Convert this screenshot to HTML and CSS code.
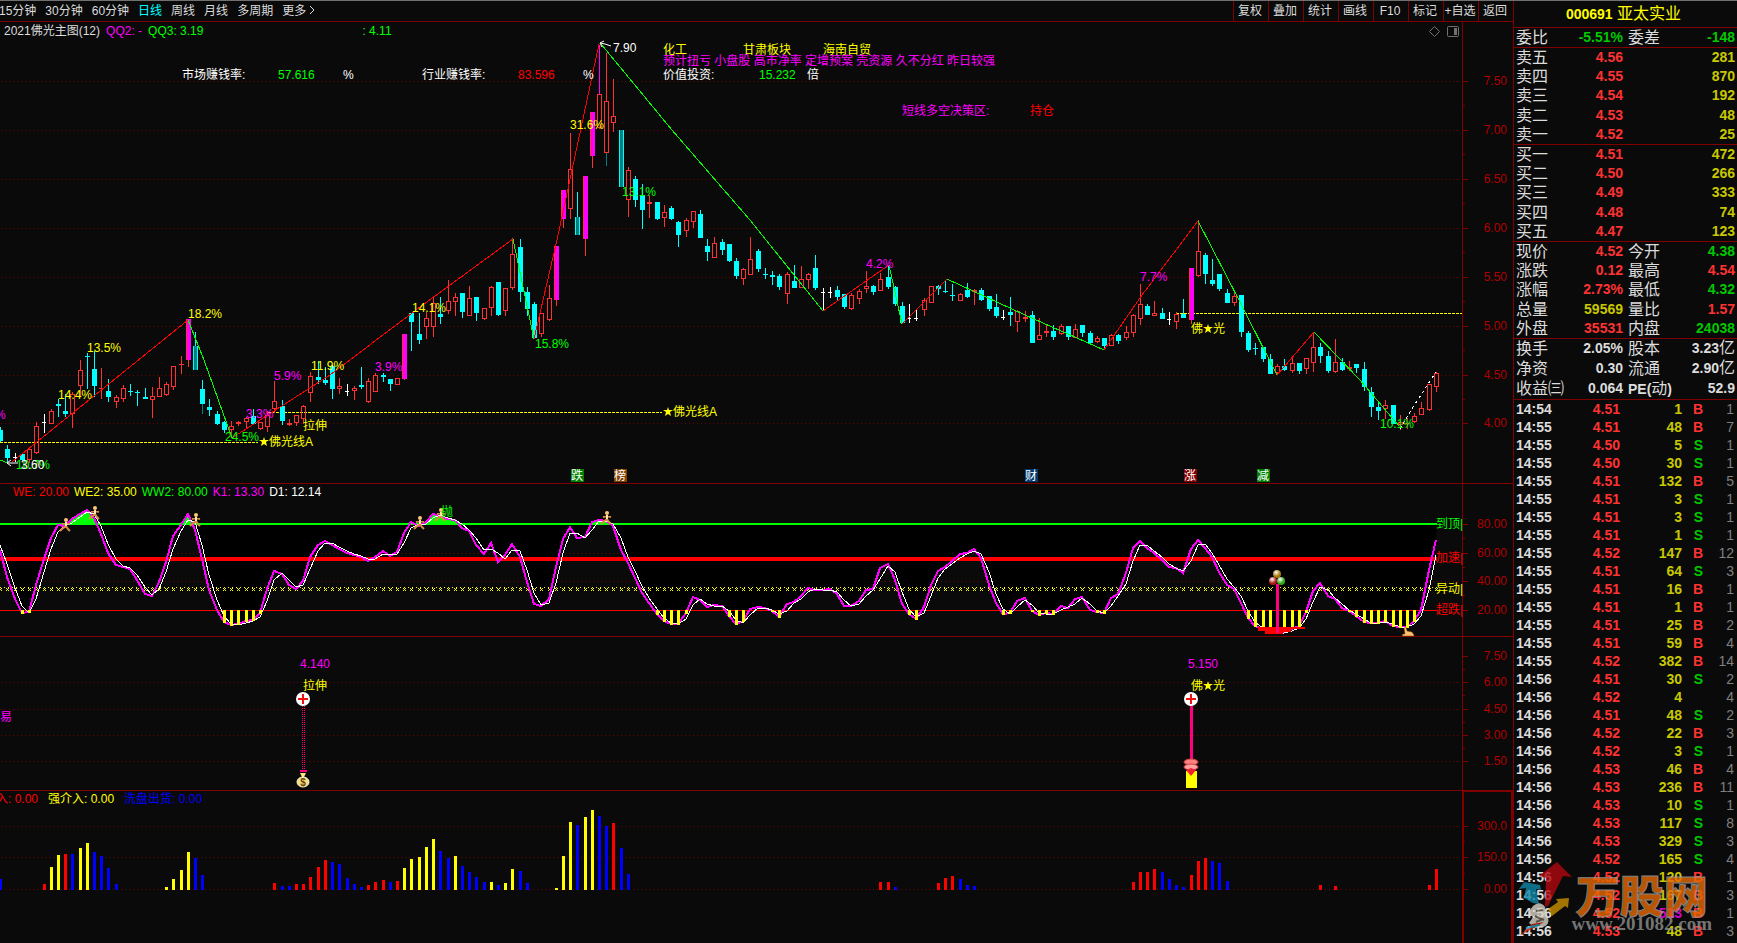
FILE: index.html
```html
<!DOCTYPE html>
<html lang="zh-CN">
<head>
    <meta charset="UTF-8">
    <meta name="viewport" content="width=device-width, initial-scale=1.0">
    <title>000691 亚太实业</title>
    <link rel="stylesheet" href="styles.css">
</head>
<body>
<div class="app">

    <main class="charts">
        <div class="toolbar">
            <nav class="periods">
                <a href="#">15分钟</a>
                <a href="#">30分钟</a>
                <a href="#">60分钟</a>
                <a href="#" class="active">日线</a>
                <a href="#">周线</a>
                <a href="#">月线</a>
                <a href="#">多周期</a>
                <a href="#">更多<svg width="6" height="10" viewBox="0 0 6 10"><path d="M1 1l4 4-4 4" fill="none" stroke="#dcdcdc"/></svg></a>
            </nav>
            <div class="tools">
                <button type="button">复权</button>
                <button type="button">叠加</button>
                <button type="button">统计</button>
                <button type="button">画线</button>
                <button type="button">F10</button>
                <button type="button">标记</button>
                <button type="button">+自选</button>
                <button type="button">返回</button>
            </div>
        </div>

        <!-- main price chart -->
        <section class="pane">
            <div class="legend legend-main">
                <span>2021佛光主图(12)</span>
                <span class="magenta">QQ2: -</span>
                <span class="lime">QQ3: 3.19</span>
                <span class="lime last">: 4.11</span>
            </div>
            <svg viewBox="0 22 1513 462">
                <g id="kline"></g>
                <g class="white">
                    <text x="182" y="79">市场赚钱率:</text>
                    <text x="343" y="79">%</text>
                    <text x="422" y="79">行业赚钱率:</text>
                    <text x="583" y="79">%</text>
                    <text x="663" y="79">价值投资:</text>
                    <text x="807" y="79">倍</text>
                    <text x="613" y="52">7.90</text>
                    <path class="stroke" d="M600 43l5 1 6 2M600 43l4-2M600 43l2 4"/>
                </g>
                <g class="lime">
                    <text x="278" y="79">57.616</text>
                    <text x="759" y="79">15.232</text>
                    <text x="225" y="441">24.5%</text>
                    <text x="535" y="348">15.8%</text>
                    <text x="622" y="196">13.1%</text>
                    <text x="1380" y="428">10.1%</text>
                    <text x="16" y="469">10.7%</text>
                </g>
                <g class="red">
                    <text x="518" y="79">83.596</text>
                    <text x="1030" y="115">持仓</text>
                </g>
                <g class="yellow">
                    <text x="663" y="54">化工</text>
                    <text x="743" y="54">甘肃板块</text>
                    <text x="823" y="54">海南自贸</text>
                    <text x="58" y="399">14.4%</text>
                    <text x="87" y="352">13.5%</text>
                    <text x="188" y="318">18.2%</text>
                    <text x="311" y="370">11.9%</text>
                    <text x="412" y="312">14.1%</text>
                    <text x="570" y="129">31.6%</text>
                    <text x="303" y="430">拉伸</text>
                    <text x="269" y="446">佛光线A</text>
                    <text x="673" y="416">佛光线A</text>
                    <text x="1191" y="333">佛</text>
                    <text x="1213" y="333">光</text>
                    <use href="#star" x="264" y="442"/>
                    <use href="#star" x="668" y="412"/>
                    <use href="#star" x="1208" y="329"/>
                </g>
                <g class="magenta">
                    <text x="663" y="65">预计扭亏 小盘股 高市净率 定增预案 壳资源 久不分红 昨日较强</text>
                    <text x="902" y="115">短线多空决策区:</text>
                    <text x="-5" y="419">%</text>
                    <text x="246" y="418">3.3%</text>
                    <text x="274" y="380">5.9%</text>
                    <text x="375" y="371">3.9%</text>
                    <text x="866" y="268">4.2%</text>
                    <text x="1140" y="281">7.7%</text>
                </g>
                <g class="white">
                    <text x="21" y="469">3.60</text>
                    <path class="stroke" d="M7 463h11M7 463l4-3M7 463l4 3"/>
                </g>
                <g id="badges"></g>
                <g class="pane-icons">
                    <path d="M1434.5 26.500l5 5-5 5-5-5z"/>
                    <rect x="1447.500" y="26.500" width="11" height="10" rx="1"/>
                    <rect class="fill" x="1454" y="28" width="3" height="7"/>
                </g>
                <defs>
                    <path id="star" d="M0-5l1 3h4l-3 2 1 4-3-2-3 2 1-4-3-2h4z"/>
                </defs>
            </svg>
        </section>

        <!-- KD style oscillator -->
        <section class="pane">
            <div class="legend legend-osc">
                <span class="red">WE: 20.00</span>
                <span class="yellow">WE2: 35.00</span>
                <span class="lime">WW2: 80.00</span>
                <span class="magenta">K1: 13.30</span>
                <span class="white">D1: 12.14</span>
            </div>
            <svg viewBox="0 484 1513 153">
                <defs>
                    <g id="runner">
                        <circle cx="1" cy="-6" r="2" fill="#ffc878"/>
                        <path d="M1-4v4l-4 3-2 2M1 0l2 3 2 2M-3-2l4-1 4 1" fill="none" stroke="#d88c3c" stroke-width="2"/>
                        <path d="M1-4v4" stroke="#ffe6b4" stroke-width="2"/>
                    </g>
                    <radialGradient id="gold" cx=".4" cy=".3"><stop offset="0" stop-color="#fff"/><stop offset="1" stop-color="#a87808"/></radialGradient>
                    <radialGradient id="ruby" cx=".4" cy=".3"><stop offset="0" stop-color="#fff"/><stop offset="1" stop-color="#b01818"/></radialGradient>
                    <radialGradient id="jade" cx=".4" cy=".3"><stop offset="0" stop-color="#fff"/><stop offset="1" stop-color="#30a818"/></radialGradient>
                </defs>
                <g id="osc"></g>
                <use href="#runner" x="65" y="526"/>
                <use href="#runner" x="94" y="514"/>
                <use href="#runner" x="195" y="521"/>
                <use href="#runner" x="419" y="524"/>
                <use href="#runner" x="440" y="516"/>
                <use href="#runner" x="606" y="519"/>
                <rect x="1276" y="584" width="3" height="49" fill="#ff0080"/>
                <circle cx="1277" cy="574" r="4" fill="url(#gold)"/>
                <circle cx="1273" cy="581" r="4" fill="url(#ruby)"/>
                <circle cx="1281" cy="581" r="4" fill="url(#jade)"/>
                <path d="M1404 628l2-1 1 4 5 1 2 3v1h-12l1-2h2z" fill="#ffc070" stroke="#804000" stroke-width=".5"/>
                <text class="lime" x="441" y="516">抛</text>
                <text class="lime" x="1436" y="528">到顶|</text>
                <text class="red" x="1436" y="562">加速|</text>
                <text class="yellow" x="1436" y="593">异动|</text>
                <text class="red" x="1436" y="614">超跌|</text>
            </svg>
        </section>

        <!-- signal pane -->
        <section class="pane">
            <svg viewBox="0 637 1513 154">
                <g id="signal"></g>
                <text class="magenta" x="0" y="721">易</text>
                <text class="magenta" x="300" y="668">4.140</text>
                <text class="yellow" x="303" y="690">拉伸</text>
                <path d="M302.500 706v64M304.500 706v64" stroke="#ff0080" stroke-dasharray="1 1"/>
                <rect x="300" y="770" width="7" height="2" fill="#ff0080"/>
                <circle cx="303" cy="699" r="7" fill="#fff"/>
                <path d="M298 699h10M303 694v10" stroke="#f01010" stroke-width="2"/>
                <path d="M300 773h6l-2 4h-2z" fill="#ffe878"/>
                <ellipse cx="303" cy="782" rx="6" ry="5" fill="#f4e080" stroke="#fff8c8"/>
                <text class="dollar" x="303" y="786">$</text>

                <text class="magenta" x="1188" y="668">5.150</text>
                <text class="yellow" x="1191" y="690">佛</text>
                <text class="yellow" x="1213" y="690">光</text>
                <use class="yellow" href="#star" x="1208" y="686"/>
                <rect x="1190" y="706" width="3" height="54" fill="#ff0080"/>
                <circle cx="1191" cy="699" r="7" fill="#fff"/>
                <path d="M1186 699h10M1191 694v10" stroke="#f01010" stroke-width="2"/>
                <rect x="1186" y="771" width="11" height="17" fill="#ff0"/>
                <ellipse cx="1191" cy="762" rx="7" ry="3" fill="#ff8080" stroke="#d04040"/>
                <ellipse cx="1191" cy="767" rx="7" ry="3" fill="#ffa0a0" stroke="#d04040"/>
                <path d="M1186 770l5-2 5 2-5 6z" fill="#f02030"/>
            </svg>
        </section>

        <!-- capital flow pane -->
        <section class="pane">
            <div class="legend legend-flow">
                <span class="red">入: 0.00</span>
                <span class="yellow">强介入: 0.00</span>
                <span class="blue">洗盘出货: 0.00</span>
            </div>
            <svg viewBox="0 791 1513 152">
                <g id="flow"></g>
            </svg>
        </section>
    </main>

    <aside class="quote">
        <h1><b>000691</b> 亚太实业</h1>

        <table class="book">
            <tbody>
                <tr><th>委比</th><td class="dn">-5.51%</td><th>委差</th><td class="dn">-148</td></tr>
            </tbody>
        </table>
        <table class="book pad">
            <tbody>
                <tr><th>卖五</th><td class="up">4.56</td><th></th><td class="vol">281</td></tr>
                <tr><th>卖四</th><td class="up">4.55</td><th></th><td class="vol">870</td></tr>
                <tr><th>卖三</th><td class="up">4.54</td><th></th><td class="vol">192</td></tr>
                <tr><th>卖二</th><td class="up">4.53</td><th></th><td class="vol">48</td></tr>
                <tr><th>卖一</th><td class="up">4.52</td><th></th><td class="vol">25</td></tr>
            </tbody>
        </table>
        <table class="book pad">
            <tbody>
                <tr><th>买一</th><td class="up">4.51</td><th></th><td class="vol">472</td></tr>
                <tr><th>买二</th><td class="up">4.50</td><th></th><td class="vol">266</td></tr>
                <tr><th>买三</th><td class="up">4.49</td><th></th><td class="vol">333</td></tr>
                <tr><th>买四</th><td class="up">4.48</td><th></th><td class="vol">74</td></tr>
                <tr><th>买五</th><td class="up">4.47</td><th></th><td class="vol">123</td></tr>
            </tbody>
        </table>
        <table class="book pad">
            <tbody>
                <tr><th>现价</th><td class="up">4.52</td><th>今开</th><td class="dn">4.38</td></tr>
                <tr><th>涨跌</th><td class="up">0.12</td><th>最高</th><td class="up">4.54</td></tr>
                <tr><th>涨幅</th><td class="up">2.73%</td><th>最低</th><td class="dn">4.32</td></tr>
                <tr><th>总量</th><td class="vol">59569</td><th>量比</th><td class="up">1.57</td></tr>
                <tr><th>外盘</th><td class="up">35531</td><th>内盘</th><td class="dn">24038</td></tr>
            </tbody>
        </table>
        <table class="book stats">
            <tbody>
                <tr><th>换手</th><td>2.05%</td><th>股本</th><td>3.23<i>亿</i></td></tr>
                <tr><th>净资</th><td>0.30</td><th>流通</th><td>2.90<i>亿</i></td></tr>
                <tr><th>收益㈢</th><td>0.064</td><th><b>PE(</b>动<b>)</b></th><td>52.9</td></tr>
            </tbody>
        </table>

        <table class="ticks">
            <tbody id="ticks"></tbody>
        </table>

        <div class="watermark">
            <svg class="mark" width="54" height="74" viewBox="0 0 54 74">
                <path d="M27 45l1-29-7-2L39 0l15 15-9-1-15 30z" fill="#b00810"/>
                <path d="M6 20l16 3 1 5-5-1 3 15-6-1-9-5 2-10-7 1z" fill="#1088a8"/>
                <path d="M30 47l10-7-2-3 13-1-1 10-3-2-13 10z" fill="#c89000"/>
                <path d="M15 44q7-6 12 1l3 10q2 8-5 10l-8 1-6-5 4-6-5-4z" fill="#d8d4c8"/>
                <path d="M18 49l7-1M17 54l9 4M18 60l7-3" stroke="#706858" stroke-width="2"/>
                <path d="M2 73l12-11 12-2-12 7z" fill="#d02010"/>
                <path d="M8 66l14-3" stroke="#20a0c0" stroke-width="2"/>
            </svg>
            <div class="brand">
                <strong>万股网</strong>
                <span>www.201082.com</span>
            </div>
        </div>
    </aside>

</div>
<script src="script.js"></script>
</body>
</html>
```
FILE: styles.css
```css
body {
    margin: 0;
    background-color: #0a0a0a;
    color: #dcdcdc;
    font-family: "Liberation Sans", "Noto Sans CJK SC", sans-serif;
    font-size: 12px;
}

.app {
    display: flex;
    border-top: 1px solid #707070;
    overflow: hidden;
}

.charts {
    flex: 1;
    min-width: 0;
}

/* toolbar */
.toolbar {
    display: flex;
    justify-content: space-between;
    height: 20px;
    border-bottom: 1px solid #800000;
}

.periods {
    display: flex;
    gap: 9px;
    margin-left: -1px;
    line-height: 20px;
    white-space: nowrap;
}

.periods a {
    color: #dcdcdc;
    text-decoration: none;
}

.periods a.active {
    color: #00ffff;
}

.periods svg {
    margin-left: 3px;
}

.tools {
    display: flex;
}

.tools button {
    width: 35px;
    padding: 0 2px 0 0;
    border: 0;
    border-left: 1px solid #800000;
    background: none;
    color: #dcdcdc;
    font: inherit;
    line-height: 20px;
    white-space: nowrap;
    cursor: pointer;
}

/* chart panes */
.pane {
    position: relative;
}

.pane > svg {
    display: block;
    width: 100%;
    height: auto;
}

.legend {
    position: absolute;
    top: 0;
    left: 4px;
    display: flex;
    gap: 6px;
    line-height: 16px;
    white-space: nowrap;
}

.legend-main {
    top: 1px;
}

.legend-main .last {
    margin-left: 153px;
}

.legend-osc {
    left: 13px;
    gap: 5px;
}

.legend-flow {
    left: -4px;
    gap: 10px;
}

.white { color: #fff; fill: #fff; }
.lime { color: #00ff00; fill: #00ff00; }
.red { color: #ff0000; fill: #ff0000; }
.yellow { color: #ffff00; fill: #ffff00; }
.magenta { color: #ff00ff; fill: #ff00ff; }
.blue { color: #0000ff; fill: #0000ff; }

.stroke {
    fill: none;
    stroke: #fff;
}

.crisp {
    shape-rendering: crispEdges;
}

.grid {
    stroke: #6e0000;
    stroke-dasharray: 1 3;
}

.frame {
    fill: none;
    stroke: #800000;
}

.axis {
    fill: #b00000;
    text-anchor: end;
}

.pane-icons {
    fill: none;
    stroke: #707070;
}

.pane-icons .fill {
    fill: #707070;
    stroke: none;
}

.badge {
    fill: #fff;
}

.dollar {
    fill: #704010;
    font-size: 10px;
    font-weight: bold;
    text-anchor: middle;
}

/* quote panel */
.quote {
    position: relative;
    width: 223px;
    border-left: 1px solid #800000;
}

.quote h1 {
    margin: 0;
    padding-right: 4px;
    height: 26px;
    border-bottom: 1px solid #800000;
    color: #ffff00;
    font-size: 16px;
    font-weight: normal;
    line-height: 26px;
    text-align: center;
}

.quote h1 b {
    font-size: 14px;
}

.quote table {
    width: 100%;
    border-collapse: collapse;
    table-layout: fixed;
}

.quote td,
.quote th {
    padding: 0;
    font-weight: bold;
    font-size: 14px;
    text-align: right;
    white-space: nowrap;
}

.book {
    height: 20px;
    border-bottom: 1px solid #800000;
}

.book.pad {
    height: 97px;
}

.book.stats {
    height: 61px;
}

.book td,
.book th {
    height: 19px;
    line-height: 19px;
}

.book th {
    width: 48px;
    padding-left: 2px;
    font-size: 16px;
    font-weight: normal;
    text-align: left;
}

.book td:nth-child(2) {
    width: 59px;
}

.book td:nth-child(2) + th {
    padding-left: 5px;
}

.book td:last-child {
    padding-right: 2px;
}

.book th b {
    font-size: 14px;
}

.book i {
    font-size: 16px;
    font-style: normal;
    font-weight: normal;
    line-height: 16px;
}

.quote .up { color: #ff3232; }
.quote .dn { color: #00c800; }
.quote .vol { color: #c8c800; }
.quote .big { color: #d000d0; }

.ticks td {
    height: 18px;
    line-height: 18px;
}

.quote .ticks td:first-child {
    width: 68px;
    padding-left: 2px;
    text-align: left;
}

.ticks td:nth-child(2) { width: 36px; }
.ticks td:nth-child(3) { width: 62px; }
.ticks td:nth-child(4) { width: 21px; }

.quote .ticks td:last-child {
    padding-right: 3px;
    color: #808080;
    font-weight: normal;
}

.watermark {
    position: absolute;
    right: 25px;
    bottom: 7px;
    display: flex;
    align-items: flex-end;
    opacity: 0.8;
}

.brand {
    display: flex;
    flex-direction: column;
    align-items: center;
    padding-bottom: 4px;
}

.brand strong {
    color: #e86800;
    font-family: "Noto Sans CJK SC", sans-serif;
    font-size: 44px;
    font-weight: 900;
    line-height: 44px;
    -webkit-text-stroke: 1px #a0a0a0;
}

.brand span {
    color: #909090;
    font-family: "Liberation Serif", serif;
    font-size: 19px;
    font-weight: bold;
    line-height: 16px;
}
```
FILE: script.js
```js
var AXIS_X = 1462;
var STEP = 7.214;

// pixel column of the n-th trading day
function dayX(i) {
    return Math.floor(7.95 + STEP * i);
}

function rect(x, y, w, h, fill) {
    return '<rect x="' + x + '" y="' + y + '" width="' + w + '" height="' + h + '" fill="' + fill + '"/>';
}

function line(points, color, width, extra) {
    return '<polyline points="' + points + '" fill="none" stroke="' + color + '" stroke-width="' + (width || 1) + '" ' + (extra || '') + '/>';
}

// grid lines, axis ticks, axis labels and bottom border of a pane
function frame(top, bottom, marks, border) {
    var s = '';
    marks.forEach(function (m, n) {
        var y = m[0] + 0.5;
        if (!m[2]) {
            s += '<line class="grid" x1="1" x2="1460" y1="' + y + '" y2="' + y + '"/>';
        }
        s += '<path class="frame" d="M' + AXIS_X + ' ' + y + 'h6"/>';
        if (n < marks.length - 1) {
            var mid = Math.floor((m[0] + marks[n + 1][0]) / 2) + 0.5;
            s += '<path class="frame" d="M' + AXIS_X + ' ' + mid + 'h3"/>';
        }
    });
    s += '<path class="frame" d="M' + (AXIS_X + 0.5) + ' ' + top + 'V' + bottom + '"/>';
    if (border) {
        s += '<path class="frame" d="M0 ' + (bottom - 0.5) + 'H1513"/>';
    }
    s = '<g class="crisp">' + s + '</g>';
    marks.forEach(function (m) {
        s += '<text class="axis" x="1507" y="' + (m[0] + 4) + '">' + m[1] + '</text>';
    });
    return s;
}

// type high top bottom low, first entry is day -1
// r hollow red, c cyan, w doji, m limit-up, t limit-down
var candles = ('c 427 430 441 442,c 445 449 458 462,w 453 457 457 462,c 453 454 460 461,r 449 449 460 463,' +
    'r 422 426 453 454,w 414 422 422 433,r 409 411 424 424,c 399 404 406 417,c 394 411 414 417,r 392 394 414 428,' +
    'r 360 370 386 396,c 353 356 357 389,c 351 369 386 397,r 368 388 389 399,c 379 391 397 402,r 395 397 402 408,' +
    'r 385 388 399 402,c 384 391 392 396,c 390 392 393 406,c 388 397 399 399,r 387 396 400 418,r 377 388 397 397,' +
    'r 382 384 395 396,r 366 366 387 390,r 356 364 365 374,m 319 319 360 367,t 332 346 370 370,c 380 389 404 414,' +
    'c 399 407 410 416,c 411 414 424 425,c 421 422 430 433,r 421 426 430 437,r 421 422 424 426,r 417 418 422 428,' +
    'c 409 416 424 424,r 422 422 429 430,r 411 415 427 432,r 381 401 409 413,c 400 406 421 425,r 419 423 425 426,' +
    'r 415 415 423 426,r 405 406 419 424,r 372 376 393 402,c 361 377 380 384,c 367 380 383 385,c 365 366 389 399,' +
    'r 378 386 389 394,w 384 391 391 396,r 386 388 391 400,c 367 385 387 389,r 378 381 402 403,r 373 375 392 392,' +
    'c 373 375 377 382,c 379 379 384 391,r 378 378 385 385,m 334 334 379 380,c 313 313 322 351,c 313 334 340 344,' +
    'r 312 318 327 339,r 298 303 327 337,c 297 314 317 324,r 280 301 311 314,r 293 297 302 316,c 293 293 312 318,' +
    'r 286 298 316 316,c 297 297 313 321,r 308 308 319 320,r 286 287 308 316,c 282 282 315 316,r 288 288 311 316,' +
    'r 238 254 288 290,c 239 247 292 302,c 287 292 309 316,c 302 304 338 338,r 313 313 334 337,r 285 298 320 321,' +
    'm 246 246 300 306,m 190 190 219 228,r 133 169 209 219,t 192 217 235 235,m 176 176 239 256,m 112 112 156 168,' +
    'r 94 94 128 129,r 53 101 153 153,r 79 116 123 132,t 130 130 187 187,r 167 170 200 217,c 176 179 200 207,' +
    'c 184 195 210 229,r 195 202 204 218,c 202 202 219 220,r 205 212 218 227,c 206 208 219 220,c 221 222 235 247,' +
    'r 218 220 231 237,r 211 211 222 228,c 210 214 238 238,c 239 246 252 261,r 237 243 258 258,c 239 242 250 255,' +
    'c 244 244 261 262,c 258 261 276 279,r 268 269 279 285,r 237 259 275 275,c 249 251 269 272,c 268 274 275 279,' +
    'c 271 275 277 285,c 274 276 287 290,r 272 274 294 304,c 265 281 288 288,r 266 279 288 288,r 273 274 280 289,' +
    'c 255 268 288 290,w 288 292 292 311,w 287 292 292 298,c 286 290 297 301,c 294 294 307 309,r 293 295 309 310,' +
    'r 289 291 299 304,r 271 286 289 293,c 285 286 292 295,r 273 279 291 291,c 265 277 287 289,c 286 287 304 306,' +
    'c 302 306 323 324,w 304 318 318 323,w 310 318 318 321,r 298 300 310 316,r 286 286 303 303,c 285 286 289 295,' +
    'c 280 291 292 293,c 284 295 296 301,r 293 294 301 301,c 283 290 297 298,r 289 290 292 305,c 288 290 300 301,' +
    'c 296 296 309 311,c 294 307 316 318,w 310 317 317 320,c 297 312 315 326,r 310 311 322 332,r 311 317 319 322,' +
    'c 311 315 343 343,r 318 335 340 340,r 324 331 333 337,c 325 331 337 340,r 324 326 334 335,c 326 326 337 340,' +
    'r 324 329 338 338,c 325 325 333 337,c 331 333 343 344,r 336 338 342 343,c 338 338 346 350,r 334 335 346 346,' +
    'c 334 335 341 344,r 326 332 338 340,r 314 315 333 337,r 284 304 319 325,c 304 306 315 315,r 301 313 316 316,' +
    'c 308 313 319 319,w 312 319 319 325,r 312 314 322 329,c 299 314 318 318,m 268 268 320 324,r 220 251 276 277,' +
    'c 253 255 274 284,c 259 280 284 286,c 274 274 289 291,c 289 293 303 303,r 290 296 303 306,c 295 295 332 337,' +
    'c 331 333 350 352,c 343 348 349 355,c 347 347 359 362,c 354 359 374 374,r 364 366 373 375,c 359 366 370 371,' +
    'r 358 363 371 373,c 363 363 371 374,r 358 358 369 374,r 332 347 363 372,c 343 347 356 363,c 351 356 371 373,' +
    'r 339 362 372 373,c 358 362 370 371,r 361 367 369 371,c 364 364 368 373,c 362 369 387 391,c 387 392 407 417,' +
    'c 402 407 411 420,r 400 405 409 419,c 405 405 424 424,r 415 422 425 430,r 418 423 424 429,r 413 416 422 423,' +
    'r 402 408 415 415,r 384 384 410 411,r 372 373 387 392').split(',');

function drawKline() {
    var s = frame(22, 484, [[81, '7.50'], [130, '7.00'], [179, '6.50'], [228, '6.00'], [277, '5.50'],
        [326, '5.00'], [375, '4.50'], [423, '4.00']], true);
    s += '<g class="crisp">';
    s += line('0,442.5 258,442.5', '#ff0', 1, 'stroke-dasharray="3 1"');
    s += line('268,412.5 662,412.5', '#ff0', 1, 'stroke-dasharray="3 1"');
    s += line('1176,313.5 1462,313.5', '#ff0', 1, 'stroke-dasharray="3 1"');

    candles.forEach(function (row, n) {
        var c = row.split(' ');
        var x = dayX(n - 1);
        var high = +c[1], top = +c[2], bottom = +c[3], low = +c[4];
        var body = Math.max(bottom - top, 1);
        if (c[0] === 'w') {
            s += rect(x, high, 1, low - high, '#fff') + rect(x - 2, top, 4, 1, '#fff');
        } else if (c[0] === 'c') {
            s += rect(x, high, 1, low - high, '#0ff') + rect(x - 2, top, 5, body, '#0ff');
        } else if (c[0] === 't') {
            s += rect(x, high, 1, low - high, '#0ff') + rect(x - 2, top, 5, body, '#0ff') + rect(x - 1, top, 3, body, '#008080');
        } else if (c[0] === 'm') {
            s += rect(x, high, 1, low - high, '#ff3232') + rect(x - 2, top, 5, body, '#ff3232') + rect(x - 1, top, 4, body, '#f0f');
        } else {
            s += rect(x, high, 1, top - high, '#ff3232') + rect(x, bottom, 1, low - bottom, '#ff3232');
            if (body < 3) {
                s += rect(x - 2, top, 5, body, '#ff3232');
            } else {
                s += '<rect x="' + (x - 1.5) + '" y="' + (top + 0.5) + '" width="4" height="' + (body - 1) + '" fill="none" stroke="#ff3232"/>';
            }
        }
    });
    s += rect(599, 45, 1, 49, '#f0f') + rect(606, 153, 1, 13, '#008080') + rect(202, 404, 1, 10, '#008080');

    // swing lines
    s += line('0,460 8,463', '#0f0');
    s += line('12,462 188,320', '#f00') + line('188,320 204,360 232,438', '#0f0');
    s += line('232,438 330,375 420,307 513,239', '#f00') + line('513,239 534,339', '#0f0');
    s += line('534,339 557,240 599,44', '#f00') + line('601,44 672,130 750,220 823,311', '#0f0');
    s += line('823,311 889,265', '#f00') + line('889,265 902,324', '#0f0');
    s += line('902,324 947,279', '#f00') + line('947,279 1025,315 1104,350', '#0f0');
    s += line('1104,350 1142,295 1198,221', '#f00') + line('1198,221 1240,302 1277,375', '#0f0');
    s += line('1277,375 1314,332', '#f00') + line('1314,332 1360,380 1399,426', '#0f0');
    s += line('1400,429 1415,404 1436,372', '#fff', 1, 'stroke-dasharray="3 3"');
    s += '</g>';
    document.getElementById('kline').innerHTML = s;

    var badges = [[571, '跌', '#008000'], [614, '榜', '#804000'], [1025, '财', '#003870'], [1184, '涨', '#800000'], [1257, '减', '#008000']];
    document.getElementById('badges').innerHTML = badges.map(function (b) {
        return rect(b[0], 469, 13, 13, b[2]) + '<text class="badge" x="' + b[0] + '" y="480">' + b[1] + '</text>';
    }).join('');
}

// K1 curve, one y value per day starting at day -1
var k1 = [550, 577, 599, 613, 612, 585, 559, 538, 525, 526, 519, 514, 510, 518, 534, 553, 565, 567, 569, 580,
    594, 596, 582, 562, 536, 525, 514, 530, 559, 590, 610, 622, 625, 624, 621, 620, 613, 589, 571, 574,
    585, 589, 581, 557, 545, 541, 545, 549, 553, 555, 557, 561, 557, 551, 556, 552, 533, 522, 526, 522,
    514, 516, 519, 520, 528, 531, 545, 554, 543, 562, 555, 544, 557, 582, 604, 606, 599, 567, 539, 527,
    538, 537, 522, 520, 521, 526, 550, 563, 578, 593, 603, 614, 621, 624, 624, 613, 597, 600, 607, 605,
    606, 616, 624, 621, 609, 607, 608, 611, 617, 604, 602, 596, 588, 590, 590, 589, 594, 606, 606, 601,
    590, 589, 568, 564, 580, 604, 614, 619, 607, 585, 571, 567, 561, 554, 553, 549, 558, 585, 603, 614,
    613, 601, 598, 611, 615, 613, 614, 606, 608, 599, 597, 610, 612, 613, 598, 594, 573, 548, 541, 548,
    553, 560, 567, 568, 573, 549, 540, 548, 557, 572, 585, 589, 603, 618, 626, 629, 632, 633, 632, 629,
    626, 612, 591, 583, 596, 599, 608, 611, 616, 622, 623, 623, 621, 626, 627, 627, 621, 610, 570, 540];

function drawOsc() {
    var s = frame(484, 637, [[524, '80.00', true], [553, '60.00'], [581, '40.00'], [610, '20.00', true]], true);
    var pts = [], d1 = [], i, x;
    for (i = 0; i < k1.length; i++) {
        x = dayX(i - 1);
        pts.push(x + ',' + k1[i]);
        d1.push(x + ',' + Math.round((k1[i] + (i ? k1[i - 1] : 540)) / 2));
    }
    var area = '0,524 ' + pts.join(' ') + ' 1437,524';
    s += '<clipPath id="above"><rect x="0" y="484" width="1437" height="40"/></clipPath>';
    s += '<clipPath id="below"><rect x="0" y="524" width="1437" height="112"/></clipPath>';
    s += '<g class="crisp">';
    s += '<polygon points="' + area + '" fill="#000" clip-path="url(#below)"/>';
    s += '<polygon points="' + area + '" fill="#0f0" clip-path="url(#above)"/>';
    s += rect(0, 523, 1437, 2, '#0f0') + rect(0, 557, 1437, 4, '#f00') + rect(0, 610, 1437, 1, '#f00');
    s += line('0,587.5 1437,587.5', '#ff0', 1, 'stroke-dasharray="1 3"');
    for (i = 0; i < k1.length; i++) {
        x = dayX(i - 1);
        s += '<path d="M' + (x - 1) + ' 588l3 3M' + (x + 2) + ' 588l-3 3" stroke="#ff0"/>';
    }
    s += line(pts.join(' '), '#f0f', 2);
    s += line(d1.join(' '), '#fff');
    for (i = 0; i < k1.length; i++) {
        if (k1[i] > 610) {
            s += rect(dayX(i - 1) - 1, 610, 3, Math.min(k1[i], 627) - 609, '#ff0');
        }
    }
    s += '<path d="M1258 627h47v2h-14v3h-8v2h-18v-3h-7z" fill="#f00"/>';
    s += '</g>';
    document.getElementById('osc').innerHTML = s;
}

// day, colour, height
var flow = ('-1b11 5r6 6y23 7y35 8r36 9b36 10y42 11y47 12b38 13b34 14b22 15b6 22y3 23y11 24y20 25y38 26b32 27b15 ' +
    '37r7 38b4 39b4 40r6 41r6 42r13 43r23 44r30 45b28 46b26 47b12 48b6 49b3 50r5 51r8 52r10 53b8 54r9 55y22 56y31 ' +
    '57y33 58y43 59y51 60b39 61b32 62y34 63b24 64b18 65b13 66b8 67y8 68b5 69y7 70y21 71b19 72b7 76y2 77y34 78y68 ' +
    '79b65 80y73 81y80 82b74 83b64 84r67 85b42 86b16 121r8 122r8 123b3 129r7 130r12 131r14 132b11 133b5 134b4 ' +
    '156r8 157r18 158r18 159r21 160b18 161b11 162b5 163b3 164r15 165r29 166r32 167b29 168b27 169b9 182r5 184r4 ' +
    '197r5 198r21').split(' ');

function drawFlow() {
    var colors = { r: '#f00', y: '#ff0', b: '#00f' };
    var s = frame(791, 943, [[826, '300.0'], [857, '150.0'], [889, '0.00']], false);
    s += '<g class="crisp">';
    flow.forEach(function (f) {
        var m = f.match(/(-?\d+)([ryb])(\d+)/);
        s += rect(dayX(+m[1]) - 1, 890 - m[3], 3, m[3], colors[m[2]]);
    });
    s += '<path class="frame" stroke-width="2" d="M1463 943V791M1463 791H1512V943"/></g>';
    document.getElementById('flow').innerHTML = s;
}

// time, price, volume, side, count
var ticks = ['14:54 4.51 1 B 1', '14:55 4.51 48 B 7', '14:55 4.50 5 S 1', '14:55 4.50 30 S 1', '14:55 4.51 132 B 5',
    '14:55 4.51 3 S 1', '14:55 4.51 3 S 1', '14:55 4.51 1 S 1', '14:55 4.52 147 B 12', '14:55 4.51 64 S 3',
    '14:55 4.51 16 B 1', '14:55 4.51 1 B 1', '14:55 4.51 25 B 2', '14:55 4.51 59 B 4', '14:55 4.52 382 B 14',
    '14:56 4.51 30 S 2', '14:56 4.52 4 - 4', '14:56 4.51 48 S 2', '14:56 4.52 22 B 3', '14:56 4.52 3 S 1',
    '14:56 4.53 46 B 4', '14:56 4.53 236 B 11', '14:56 4.53 10 S 1', '14:56 4.53 117 S 8', '14:56 4.53 329 S 3',
    '14:56 4.52 165 S 4', '14:56 4.52 120 B 1', '14:56 4.52 167 B 3', '14:56 4.52 513 B 1', '14:56 4.53 48 B 3'];

function drawTicks() {
    document.getElementById('ticks').innerHTML = ticks.map(function (t) {
        var c = t.split(' ');
        return '<tr><td>' + c[0] + '</td><td class="up">' + c[1] + '</td>' +
            '<td class="' + (+c[2] > 500 ? 'big' : 'vol') + '">' + c[2] + '</td>' +
            '<td class="' + (c[3] === 'B' ? 'up' : 'dn') + '">' + (c[3] === '-' ? '' : c[3]) + '</td>' +
            '<td>' + c[4] + '</td></tr>';
    }).join('');
}

drawKline();
drawOsc();
document.getElementById('signal').innerHTML = frame(637, 791,
    [[656, '7.50', true], [682, '6.00'], [709, '4.50'], [735, '3.00'], [761, '1.50']], true);
drawFlow();
drawTicks();
```
